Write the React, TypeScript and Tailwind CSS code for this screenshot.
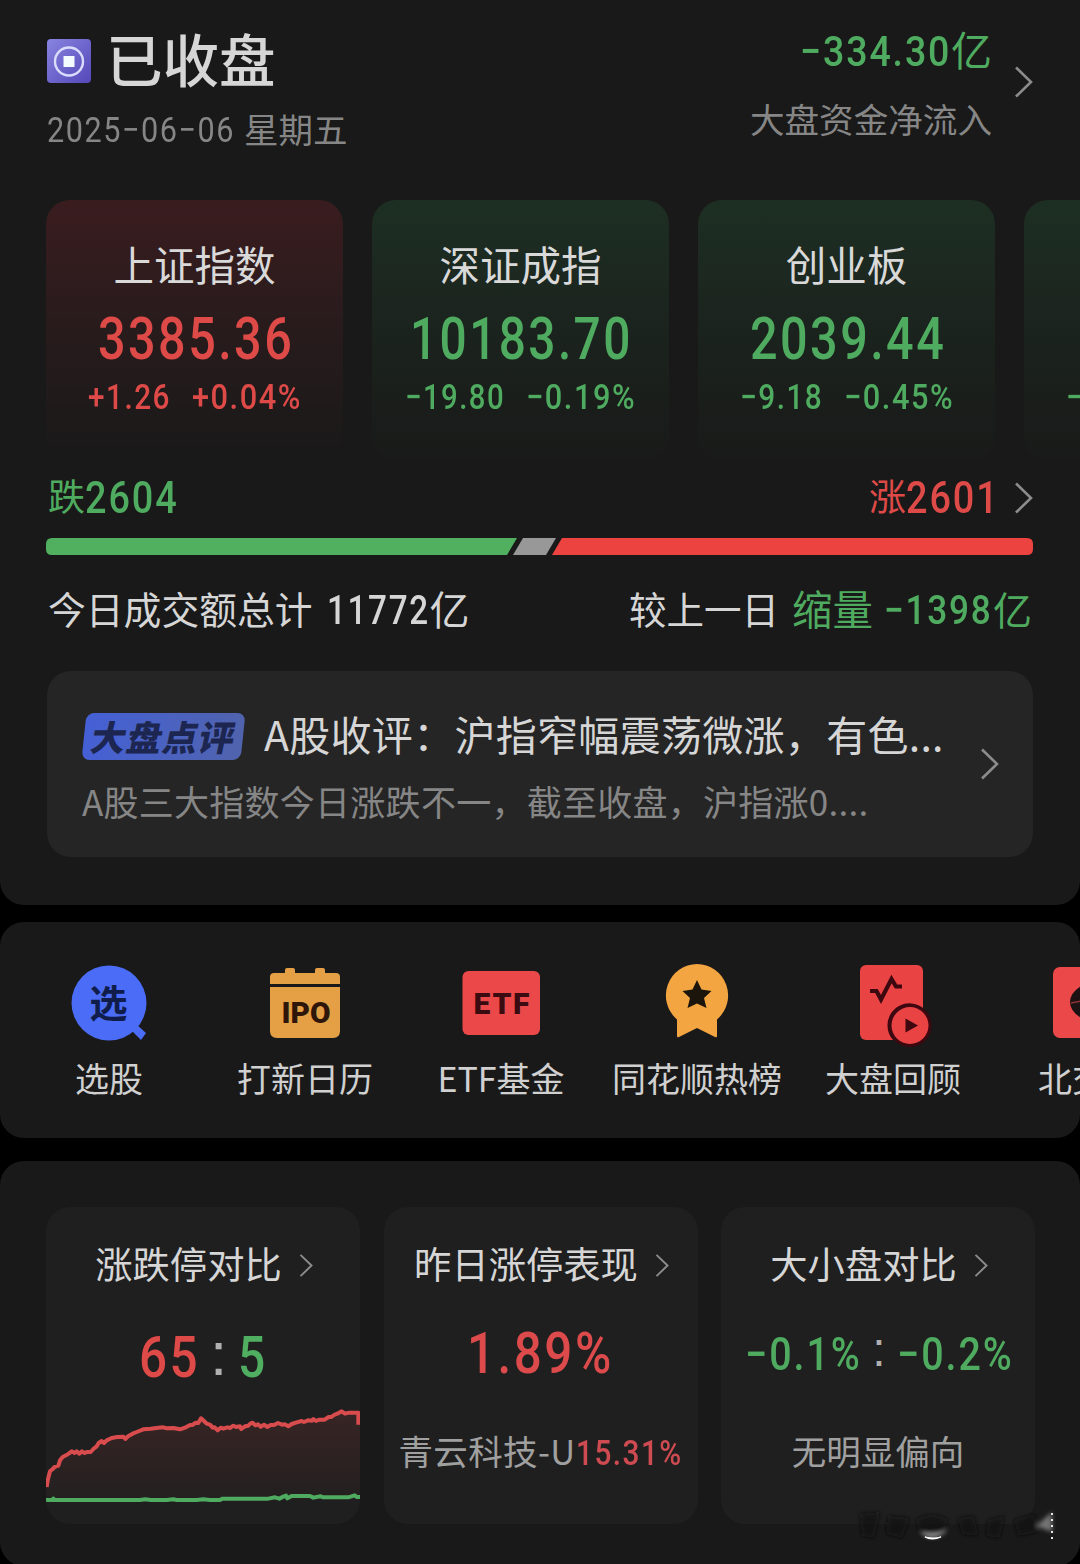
import React, { useLayoutEffect, useRef, useState } from 'react';
import clsx from 'clsx';

type Trend = 'up' | 'down';

interface IndexQuote {
  name: string;
  value: string;
  valueWidth: number;
  change: string;
  changeWidth: number;
  percent: string;
  percentWidth: number;
  trend: Trend;
}

interface Shortcut {
  label: string;
  icon: React.ReactNode;
}

const TREND_TEXT: Record<Trend, string> = {
  up: 'text-[#de4a48]',
  down: 'text-[#4fab5f]',
};

const TREND_CARD: Record<Trend, string> = {
  up: 'from-[#3a1c1f] via-[#281b1c] to-[#191919]',
  down: 'from-[#1d2f23] via-[#1b231e] to-[#191a19]',
};

const QUOTES: IndexQuote[] = [
  { name: '上证指数', value: '3385.36', valueWidth: 196, change: '+1.26', changeWidth: 83, percent: '+0.04%', percentWidth: 110, trend: 'up' },
  { name: '深证成指', value: '10183.70', valueWidth: 223, change: '−19.80', changeWidth: 100, percent: '−0.19%', percentWidth: 110, trend: 'down' },
  { name: '创业板', value: '2039.44', valueWidth: 196, change: '−9.18', changeWidth: 83, percent: '−0.45%', percentWidth: 110, trend: 'down' },
];

// Condenses its text to a fixed width, so the figures get narrow DIN-like proportions
const Figure: React.FC<{ width: number; className?: string; children: React.ReactNode }> = ({ width, className, children }) => {
  const ref = useRef<HTMLSpanElement>(null);
  const [scale, setScale] = useState(1);

  useLayoutEffect(() => {
    if (ref.current) {
      setScale(width / ref.current.offsetWidth);
    }
  }, [width]);

  return (
    <span className={clsx('inline-block shrink-0 whitespace-nowrap font-[Roboto,sans-serif] font-medium leading-none tracking-[0.05em]', className)} style={{ width }}>
      <span ref={ref} className="inline-block origin-left" style={{ transform: `scaleX(${scale})` }}>
        {children}
      </span>
    </span>
  );
};

const Chevron: React.FC<{ className?: string }> = ({ className = 'h-[32px] w-[19px]' }) => (
  <svg viewBox="0 0 19 32" className={clsx('shrink-0 text-[#8c8c8c]', className)} fill="none" stroke="currentColor" strokeWidth="2.6">
    <path d="M2 1.5 L17 16 L2 30.5" />
  </svg>
);

const Header = () => (
  <div className="flex h-[200px] justify-between pl-[47px] pr-[47px]">
    <div className="pt-[25px]">
      <div className="flex h-[72px] items-center gap-[15px]">
        <svg viewBox="0 0 44 44" className="h-[44px] w-[44px]">
          <defs>
            <linearGradient id="status" x1="0" y1="0" x2="1" y2="1">
              <stop offset="0" stopColor="#8785e0" />
              <stop offset="1" stopColor="#5547b8" />
            </linearGradient>
          </defs>
          <rect width="44" height="44" rx="4" fill="url(#status)" />
          <circle cx="22" cy="22.5" r="14" fill="none" stroke="#d9dcfb" strokeWidth="2.4" />
          <rect x="16.5" y="17" width="11" height="11" fill="#f4fbff" />
        </svg>
        <h1 className="-mt-[8px] text-[56.5px] font-medium leading-none text-[#d6d6d6]">已收盘</h1>
      </div>
      <div className="flex h-[64px] items-center gap-[9px] text-[#868686]">
        <Figure width={188} className="mt-[4px] text-[35.5px] font-normal">2025−06−06</Figure>
        <span className="-mt-[1px] text-[34.5px] leading-none">星期五</span>
      </div>
    </div>
    <div className="flex pt-[20px]">
      <div className="flex flex-col items-end">
        <div className="flex h-[60px] items-center text-[#4fab5f]">
          <Figure width={151} className="mt-[2px] text-[43px]">−334.30</Figure>
          <span className="-mt-[4px] text-[41px] leading-none">亿</span>
        </div>
        <div className="mt-[1px] flex h-[74px] items-center text-[34.6px] leading-none text-[#868686]">大盘资金净流入</div>
      </div>
      <Chevron className="ml-[22px] mt-[46px] h-[32px] w-[19px]" />
    </div>
  </div>
);

const QuoteCard: React.FC<{ quote: IndexQuote }> = ({ quote }) => (
  <div className={clsx('flex h-[260px] w-[297px] shrink-0 flex-col items-center rounded-[24px] bg-linear-to-b pt-[34px]', TREND_CARD[quote.trend])}>
    <div className="flex h-[60px] items-center text-[40.5px] leading-none text-[#d9d9d9]">{quote.name}</div>
    <div className={clsx('flex h-[86px] items-center pl-[2px] pt-[2px]', TREND_TEXT[quote.trend])}>
      <Figure width={quote.valueWidth} className="text-[59px]">{quote.value}</Figure>
    </div>
    <div className={clsx('flex h-[36px] items-center gap-[21px]', TREND_TEXT[quote.trend])}>
      <Figure width={quote.changeWidth} className="text-[35.5px]">{quote.change}</Figure>
      <Figure width={quote.percentWidth} className="text-[35.5px]">{quote.percent}</Figure>
    </div>
  </div>
);

const Breadth = () => (
  <div className="pl-[46px] pr-[47px]">
    <div className="flex h-[78px] items-center justify-between pb-[3px]">
      <div className="flex items-center text-[#4fab5f]">
        <span className="-mt-[4px] ml-[2px] text-[37px] leading-none">跌</span>
        <Figure width={94} className="mt-[2px] text-[43.5px]">2604</Figure>
      </div>
      <div className="flex items-center text-[#de4a48]">
        <span className="-mt-[4px] text-[37px] leading-none">涨</span>
        <Figure width={94} className="mt-[2px] text-[43.5px]">2601</Figure>
        <Chevron className="ml-[14px] h-[32px] w-[19px]" />
      </div>
    </div>
    <svg viewBox="0 0 987 17" className="block h-[17px] w-[987px]">
      <path d="M6 0 H471 L461 17 H6 Q0 17 0 11 V6 Q0 0 6 0Z" fill="#50b060" />
      <path d="M477 0 H510 L500 17 H467Z" fill="#989898" />
      <path d="M516 0 H981 Q987 0 987 6 V11 Q987 17 981 17 H506Z" fill="#ec4340" />
    </svg>
    <div className="flex h-[108px] items-center justify-between pl-[2px] pr-[1px] pt-[2px] text-[#d6d6d6]">
      <div className="flex items-center">
        <span className="-mt-[4px] text-[37.8px] leading-none">今日成交额总计</span>
        <Figure width={103} className="ml-[14px] text-[41px]">11772</Figure>
        <span className="-mt-[4px] text-[40px] leading-none">亿</span>
      </div>
      <div className="flex items-center">
        <span className="-mt-[4px] text-[37.5px] leading-none">较上一日</span>
        <span className="-mt-[4px] ml-[13px] text-[40.5px] leading-none text-[#4fab5f]">缩量</span>
        <Figure width={109} className="ml-[11px] text-[41px] text-[#4fab5f]">−1398</Figure>
        <span className="-mt-[4px] text-[39px] leading-none text-[#4fab5f]">亿</span>
      </div>
    </div>
  </div>
);

const NewsCard = () => (
  <div className="ml-[47px] mt-[8px] flex h-[186px] w-[986px] items-center rounded-[24px] bg-[#252525] pl-[35px]">
    <div className="w-[898px] pt-[7px]">
      <div className="flex h-[62px] items-center">
        <div className="ml-[2px] mt-[3px] flex h-[47px] w-[159px] -skew-x-6 items-center justify-center rounded-[8px] bg-linear-to-r from-[#4560d6] to-[#5063ad]">
          <span className="-mt-[2px] ml-[2px] -skew-x-6 text-[35px] font-black leading-none tracking-[1px] text-[#1c2650]">大盘点评</span>
        </div>
        <span className="-mt-[3px] ml-[21px] whitespace-nowrap text-[41px] leading-none tracking-[0.3px] text-[#d6d6d6]">A股收评：沪指窄幅震荡微涨，有色...</span>
      </div>
      <div className="mt-[3px] flex h-[62px] items-center whitespace-nowrap text-[35px] leading-none tracking-[0.26px] text-[#868686]">
        A股三大指数今日涨跌不一，截至收盘，沪指涨0....
      </div>
    </div>
    <Chevron />
  </div>
);

const StockPickIcon = () => (
  <svg viewBox="0 0 80 80" className="h-[80px] w-[80px]">
    <circle cx="40" cy="40" r="37.5" fill="#4a6cf7" />
    <path d="M62 67 L67 61 L77 70 L72 77Z" fill="#4a6cf7" />
    <text x="39.5" y="54" textAnchor="middle" fontSize="38" fontWeight="700" fill="#101c4a">选</text>
  </svg>
);

const IpoIcon = () => (
  <svg viewBox="0 0 80 80" className="h-[80px] w-[80px]">
    <path d="M5 21 V14 Q5 10 9 10 H20 V7 Q20 5 22 5 H28 Q30 5 30 7 V10 H50 V7 Q50 5 52 5 H58 Q60 5 60 7 V10 H71 Q75 10 75 14 V21Z" fill="#e5a045" />
    <path d="M5 24 H75 V68 Q75 75 68 75 H12 Q5 75 5 68Z" fill="#e5a045" />
    <text x="41" y="60" textAnchor="middle" fontFamily="Roboto" fontSize="30" fontWeight="900" textLength="49" lengthAdjust="spacingAndGlyphs" fill="#2e160a">IPO</text>
  </svg>
);

const EtfIcon = () => (
  <svg viewBox="0 0 80 80" className="h-[80px] w-[80px]">
    <rect x="1.500" y="8" width="77.500" height="64" rx="6" fill="#eb484a" />
    <text x="40.500" y="50.500" textAnchor="middle" fontFamily="Roboto" fontSize="30" fontWeight="900" textLength="56" lengthAdjust="spacing" fill="#3b0b12">ETF</text>
  </svg>
);

const HotListIcon = () => (
  <svg viewBox="0 0 80 80" className="h-[80px] w-[80px]">
    <path d="M40 1 A31.500 31.500 0 0 1 60 56.500 V73 Q60 75 58 74 L40 65 L22 74 Q20 75 20 73 V56.500 A31.500 31.500 0 0 1 40 1Z" fill="#f2a541" />
    <path d="M40 17 L44.500 26.500 L54.500 28 L47 35 L49.500 45 L40 40.500 L30.500 45 L33 35 L25.500 28 L35.500 26.500Z" fill="#1c150c" />
  </svg>
);

const ReviewIcon = () => (
  <svg viewBox="0 0 80 80" className="h-[80px] w-[80px] overflow-visible">
    <rect x="7" y="2" width="63" height="75" rx="6" fill="#ea4344" />
    <path d="M17 28 H23.500 L28 36.500 L38.500 16 L43 23.500 H49" fill="none" stroke="#3d0810" strokeWidth="4.200" />
    <path d="M34.500 63 A22 22 0 0 1 70 45 V77 H40 A22 22 0 0 1 34.500 63Z" fill="#3d0810" />
    <path d="M36 77.500 H70 V46 L78 50 V80 H40Z" fill="#191919" />
    <circle cx="57" cy="62.500" r="21.500" fill="#3d0810" />
    <circle cx="57" cy="62.500" r="18.500" fill="#ea4344" />
    <path d="M52.500 55.500 L65 62.500 L52.500 69.500Z" fill="#3d0810" />
  </svg>
);

const BeijingIcon = () => (
  <svg viewBox="0 0 80 80" className="h-[80px] w-[80px]">
    <rect x="4" y="4" width="72" height="71" rx="7" fill="#eb484a" />
    <path d="M40 19 Q21 27 21 39 Q21 51 40 59Z" fill="#1c1213" />
    <path d="M22 40 L32 38" stroke="#8f3236" strokeWidth="1.500" />
  </svg>
);

const SHORTCUTS: Shortcut[] = [
  { label: '选股', icon: <StockPickIcon /> },
  { label: '打新日历', icon: <IpoIcon /> },
  { label: 'ETF基金', icon: <EtfIcon /> },
  { label: '同花顺热榜', icon: <HotListIcon /> },
  { label: '大盘回顾', icon: <ReviewIcon /> },
  { label: '北交所', icon: <BeijingIcon /> },
];

const StatCard: React.FC<{ title: string; children: React.ReactNode }> = ({ title, children }) => (
  <div className="flex h-[317px] w-[314px] shrink-0 flex-col items-center overflow-hidden rounded-[24px] bg-[#1f1f1f]">
    <div className="mt-[28px] flex h-[60px] items-center gap-[17px] pl-[2px]">
      <span className="-mt-[3px] text-[37.3px] leading-none text-[#d6d6d6]">{title}</span>
      <Chevron className="h-[25px] w-[14px]" />
    </div>
    {children}
  </div>
);

const LimitChart = () => (
  <svg viewBox="0 0 942 320" className="block h-[106.66px] w-[314px]">
    <defs>
      <linearGradient id="area" x1="0" y1="0" x2="0" y2="1">
        <stop offset="0" stopColor="#e34a48" stopOpacity="0.13" />
        <stop offset="1" stopColor="#e34a48" stopOpacity="0.02" />
      </linearGradient>
    </defs>
    <g transform="translate(-48 -640)" fill="none" strokeWidth="12" strokeLinejoin="round">
      <path d="M48 890 L60 845 L85 825 L95 803 L125 782 L170 790 L205 760 L245 745 L300 738 L340 718 L450 720 L505 700 L513 684 L560 725 L632 716 L668 700 L720 708 L775 708 L850 690 L910 676 L935 663 L990 670 V930 H48Z" fill="url(#area)" />
      <path d="M50 892 L54 868 L60 845 L68 838 L74 832 L85 828 L90 812 L98 802 L108 797 L116 792 L125 785 L134 790 L140 785 L148 792 L156 785 L164 790 L172 787 L182 787 L190 778 L200 770 L206 760 L215 754 L222 760 L230 752 L245 745 L262 742 L280 741 L286 748 L294 740 L308 732 L320 727 L340 719 L362 717 L385 714 L400 713 L410 716 L430 715 L450 719 L465 714 L480 706 L488 706 L496 699 L505 700 L513 686 L522 694 L530 702 L540 705 L548 714 L554 713 L563 722 L572 714 L580 717 L592 713 L600 715 L610 708 L618 712 L630 710 L634 718 L645 710 L655 708 L661 702 L668 699 L676 707 L684 704 L692 711 L702 705 L712 712 L722 706 L732 706 L744 700 L756 705 L764 704 L775 710 L785 703 L800 698 L815 694 L822 697 L834 692 L846 693 L850 688 L858 694 L868 690 L884 690 L896 682 L904 682 L912 676 L922 672 L935 665 L945 672 L958 669 L985 669 L985 705" stroke="#d94c4e" />
      <path d="M48 931 H68 L70 927 L74 931 H330 L346 929 L362 931 H410 L430 929 L440 931 H500 L520 929 L540 931 H570 L578 927 H715 L735 923 L748 927 L760 921 L768 918 L772 926 L785 919 H840 L850 924 L872 920 L880 923 H955 L974 917 L980 922 H990" stroke="#4fab5f" />
    </g>
  </svg>
);

// Faint remains of a stamp in the corner
const Stamp = () => (
  <svg viewBox="0 0 210 40" className="absolute bottom-[20px] right-[20px] h-[40px] w-[210px]">
    <defs>
      <filter id="soft"><feGaussianBlur stdDeviation="2.2" /></filter>
    </defs>
    <g filter="url(#soft)" fill="#0f0f0f">
      <path d="M10 8 L30 6 L24 32 L12 30Z M38 10 L60 12 L52 32 L36 28Z M66 14 Q82 4 98 14 L92 28 H70Z M108 12 L124 10 L128 30 L112 28Z M138 14 L154 10 L150 32 L136 30Z M164 14 L184 8 L188 26 L168 30Z" opacity="0.7" />
      <path d="M186 20 L202 6 V26Z" fill="#9a9a9a" opacity="0.7" />
      <path d="M70 26 Q82 38 98 24 Q84 30 70 26Z" fill="#bbb" opacity="0.8" />
    </g>
    <path d="M75 31 Q82 35 91 31 Q84 33 75 31Z" fill="#fff" stroke="#fff" strokeWidth="1.2" />
    <path d="M202 7 V34" stroke="#e8e8e8" strokeWidth="2" strokeDasharray="2 4" />
  </svg>
);

const Colon: React.FC<{ className: string }> = ({ className }) => (
  <span className={clsx("text-center font-['Liberation_Sans',sans-serif] leading-none text-[#b0b0b0]", className)}>:</span>
);

export default function App() {
  return (
    <main className="h-[1564px] w-[1080px] overflow-hidden bg-black font-['Noto_Sans_CJK_SC',sans-serif]">
      <section className="h-[905px] overflow-hidden rounded-b-[24px] bg-[#191919]">
        <Header />
        <div className="flex gap-[29px] overflow-hidden pl-[46px]">
          {QUOTES.map((quote) => (
            <QuoteCard key={quote.name} quote={quote} />
          ))}
          <div className="h-[260px] w-[297px] shrink-0 rounded-[24px] bg-linear-to-b from-[#1d2f23] via-[#1b231e] to-[#191a19] pl-[42px] pt-[180px]">
            <Figure width={18} className="text-[35.5px] text-[#4fab5f]">−</Figure>
          </div>
        </div>
        <Breadth />
        <NewsCard />
      </section>

      <section className="mt-[17px] flex h-[216px] overflow-hidden rounded-[24px] bg-[#191919] pl-[11px] pt-[41px]">
        {SHORTCUTS.map((item) => (
          <div key={item.label} className="flex w-[196px] shrink-0 flex-col items-center">
            {item.icon}
            <span className="mt-[18px] whitespace-nowrap text-[34px] leading-none text-[#d0d0d0]">{item.label}</span>
          </div>
        ))}
      </section>

      <section className="relative mt-[23px] flex h-[405px] gap-[23.5px] rounded-[24px] bg-[#191919] pl-[46px] pt-[46px]">
        <StatCard title="涨跌停对比">
          <div className="mt-[22px] flex h-[80px] items-center">
            <Figure width={61} className="mt-[2px] text-[57.5px] text-[#de4a48]">65</Figure>
            <Colon className="-mt-[6px] w-[38px] text-[62px]" />
            <Figure width={30} className="mt-[2px] text-[57.5px] text-[#4fae60]">5</Figure>
          </div>
          <div className="mt-[6px]">
            <LimitChart />
          </div>
        </StatCard>
        <StatCard title="昨日涨停表现">
          <div className="mt-[18px] flex h-[80px] items-center">
            <Figure width={147} className="mt-[2px] text-[57.5px] text-[#dc4a4b]">1.89%</Figure>
          </div>
          <div className="mt-[29px] flex h-[60px] items-center">
            <span className="-mt-[3px] whitespace-nowrap text-[34.5px] leading-none tracking-[0.4px] text-[#a0a0a0]">青云科技-U</span>
            <Figure width={107} className="mt-[2px] text-[35px] text-[#cf4b52]">15.31%</Figure>
          </div>
        </StatCard>
        <StatCard title="大小盘对比">
          <div className="mt-[18px] flex h-[80px] items-center pl-[2px]">
            <Figure width={117} className="mt-[2px] text-[46.5px] text-[#4fab5f]">−0.1%</Figure>
            <Colon className="-mt-[6px] w-[35px] text-[48px]" />
            <Figure width={117} className="mt-[2px] text-[46.5px] text-[#4fab5f]">−0.2%</Figure>
          </div>
          <div className="mt-[29px] flex h-[60px] items-center">
            <span className="-mt-[3px] text-[34.5px] leading-none text-[#a0a0a0]">无明显偏向</span>
          </div>
        </StatCard>
        <Stamp />
      </section>
    </main>
  );
}
